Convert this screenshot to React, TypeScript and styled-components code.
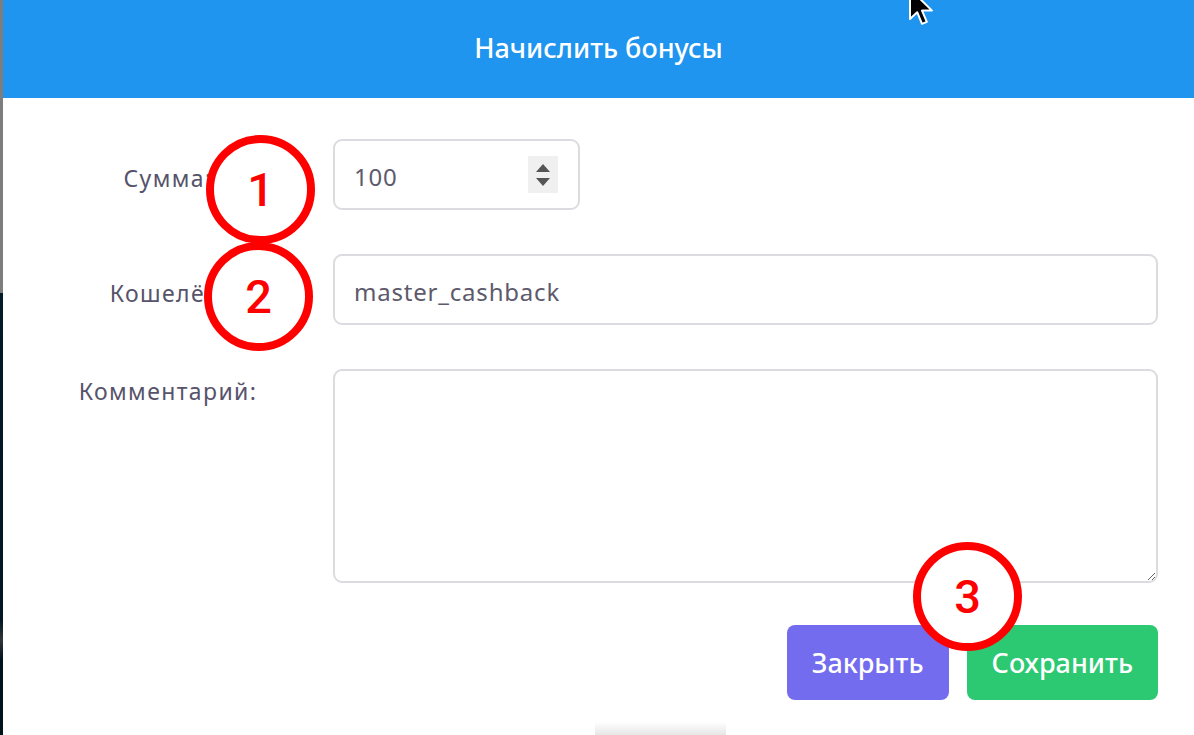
import styled, { createGlobalStyle } from "styled-components"

const GlobalStyle = createGlobalStyle`
html, body {
  margin: 0;
  padding: 0;
  background: #fff;
}
body {
  font-family: 'Noto Sans', 'Open Sans', sans-serif;
  overflow: hidden;
}
`

const Page = styled.div`
position: relative;
display: flex;
width: 1194px;
height: 735px;
overflow: hidden;
`
const SideStrip = styled.div`
width: 3px;
flex-shrink: 0;
background: linear-gradient(to bottom, #7d7d7d 0, #7d7d7d 293px, #021a29 293px, #021624 620px, #31363a 640px, #01121d 660px);
`
const Modal = styled.div`
flex: 1;
display: flex;
flex-direction: column;
background: #fff;
`
const Header = styled.div`
height: 98px;
background: #1f95f0;
display: flex;
align-items: center;
justify-content: center;
`
const Title = styled.h2`
margin: 0 0 4px 0;
color: #fff;
font-size: 27px;
font-weight: 500;
`
const Body = styled.div`
display: grid;
grid-template-columns: 296px 1fr;
column-gap: 17px;
row-gap: 44px;
padding: 41px 36px 0 17px;
`
const Label = styled.label<{ $top?: boolean }>`
display: flex;
justify-content: center;
align-items: ${p => (p.$top ? "flex-start" : "center")};
padding-top: 6px;
color: #56536b;
font-size: 23px;
font-weight: 400;
letter-spacing: 1.4px;
`
const InputBox = styled.div<{ $width?: string }>`
box-sizing: border-box;
width: ${p => p.$width || "100%"};
height: 71px;
border: 2px solid #dcdce0;
border-radius: 9px;
display: flex;
align-items: center;
padding: 0 20px 0 19px;
`
const TextInput = styled.input`
flex: 1;
min-width: 0;
border: none;
outline: none;
background: transparent;
font-family: inherit;
font-size: 24px;
letter-spacing: 0.8px;
color: #5d5a6c;
padding: 0;
margin-top: 4px;
`
const Spinner = styled.div`
width: 30px;
height: 37px;
background: #f0f0f0;
display: flex;
flex-direction: column;
align-items: center;
justify-content: center;
gap: 6px;
`
const Comment = styled.textarea`
box-sizing: border-box;
width: 100%;
height: 214px;
border: 2px solid #dcdce0;
border-radius: 9px;
outline: none;
resize: both;
font-family: inherit;
font-size: 24px;
color: #5d5a6c;
padding: 16px 19px;
`
const Footer = styled.div`
display: flex;
justify-content: flex-end;
gap: 18px;
padding: 42px 36px 0 0;
`
const Button = styled.button<{ $color: string }>`
height: 75px;
padding: 0 25px;
border: none;
border-radius: 8px;
background: ${p => p.$color};
color: #fff;
font-family: inherit;
font-size: 27px;
font-weight: 500;
`
const BottomShade = styled.div`
position: absolute;
left: 595px;
bottom: 0;
width: 131px;
height: 13px;
background: linear-gradient(to bottom, #fff, #e6e6e6);
`
const Marker = styled.div<{ $x: number; $y: number }>`
position: absolute;
left: ${p => p.$x}px;
top: ${p => p.$y}px;
box-sizing: border-box;
width: 109px;
height: 109px;
border: 8px solid #ff0000;
border-radius: 50%;
background: #fff;
display: flex;
align-items: center;
justify-content: center;
font-family: Roboto, 'Liberation Sans', Arial, sans-serif;
font-weight: 500;
font-size: 47px;
color: #ff0000;
`
const Cursor = styled.svg`
position: absolute;
left: 908px;
top: -13px;
`

const Triangle = ({ up }: { up?: boolean }) => (
    <svg width="14" height="8" viewBox="0 0 14 8">
        <path d={up ? "M0 8 L7 0 L14 8 Z" : "M0 0 L14 0 L7 8 Z"} fill="#555" />
    </svg>
)

const App = () => {
    return (
        <Page>
            <GlobalStyle />
            <SideStrip />
            <Modal>
                <Header>
                    <Title>Начислить бонусы</Title>
                </Header>
                <Body>
                    <Label>Сумма:</Label>
                    <InputBox $width="247px">
                        <TextInput defaultValue="100" />
                        <Spinner>
                            <Triangle up />
                            <Triangle />
                        </Spinner>
                    </InputBox>
                    <Label>Кошелёк:</Label>
                    <InputBox>
                        <TextInput defaultValue="master_cashback" />
                    </InputBox>
                    <Label $top>Комментарий:</Label>
                    <Comment />
                </Body>
                <Footer>
                    <Button $color="#736cef">Закрыть</Button>
                    <Button $color="#2cc872">Сохранить</Button>
                </Footer>
            </Modal>
            <BottomShade />
            <Marker $x={206} $y={135}>1</Marker>
            <Marker $x={204} $y={242}>2</Marker>
            <Marker $x={913} $y={542}>3</Marker>
            <Cursor width="30" height="40" viewBox="0 0 15 20">
                <path d="M1 1 L1 16 L4.6 12.6 L7 18.4 L9.4 17.4 L7 11.8 L12 11.8 Z" fill="#000" stroke="#fff" strokeWidth="1" strokeLinejoin="round" />
            </Cursor>
        </Page>
    )
}

export default App
